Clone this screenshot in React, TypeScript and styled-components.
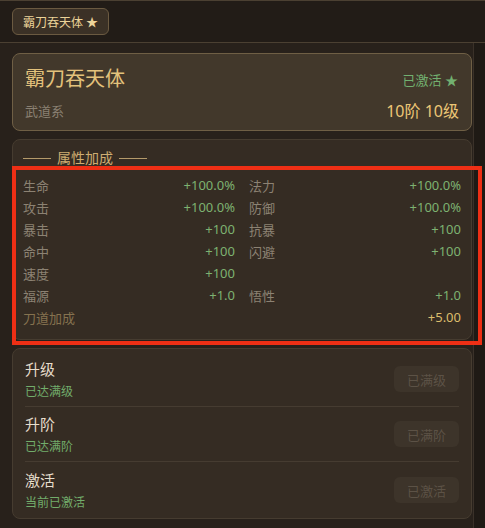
import styled, { createGlobalStyle } from 'styled-components';

const GlobalStyle = createGlobalStyle`
  html, body {
    margin: 0;
    padding: 0;
    background: #201a15;
    font-family: "Noto Sans", "Noto Sans CJK SC", sans-serif;
  }
`;

type Stat = { label: string; value: string };

const statRows: [Stat, Stat | null][] = [
  [{ label: '生命', value: '+100.0%' }, { label: '法力', value: '+100.0%' }],
  [{ label: '攻击', value: '+100.0%' }, { label: '防御', value: '+100.0%' }],
  [{ label: '暴击', value: '+100' }, { label: '抗暴', value: '+100' }],
  [{ label: '命中', value: '+100' }, { label: '闪避', value: '+100' }],
  [{ label: '速度', value: '+100' }, null],
  [{ label: '福源', value: '+1.0' }, { label: '悟性', value: '+1.0' }],
];

const actions = [
  { title: '升级', status: '已达满级', button: '已满级' },
  { title: '升阶', status: '已达满阶', button: '已满阶' },
  { title: '激活', status: '当前已激活', button: '已激活' },
];

export default function App() {
  return (
    <Page>
      <GlobalStyle />
      <TabBar>
        <Tab>霸刀吞天体 ★</Tab>
      </TabBar>
      <Body>
        <Content>
          <HeaderCard>
            <HeaderRow>
              <Title>霸刀吞天体</Title>
              <Active>已激活 ★</Active>
            </HeaderRow>
            <HeaderRow>
              <School>武道系</School>
              <Level>10阶 10级</Level>
            </HeaderRow>
          </HeaderCard>

          <StatsCard>
            <SectionTitle>
              <Dash />
              属性加成
              <Dash />
            </SectionTitle>
            <StatGrid>
              {statRows.map(([a, b], i) => (
                <StatRow key={i}>
                  <StatLabel>{a.label}</StatLabel>
                  <StatValue>{a.value}</StatValue>
                  <StatLabel>{b ? b.label : ''}</StatLabel>
                  <StatValue>{b ? b.value : ''}</StatValue>
                </StatRow>
              ))}
              <BonusRow>
                <StatLabel $bonus>刀道加成</StatLabel>
                <StatValue $bonus>+5.00</StatValue>
              </BonusRow>
            </StatGrid>
            <Highlight />
          </StatsCard>

          <ActionCard>
            {actions.map((a) => (
              <ActionRow key={a.title}>
                <ActionText>
                  <ActionTitle>{a.title}</ActionTitle>
                  <ActionStatus>{a.status}</ActionStatus>
                </ActionText>
                <DisabledButton disabled>{a.button}</DisabledButton>
              </ActionRow>
            ))}
          </ActionCard>
        </Content>
        <Gutter />
      </Body>
    </Page>
  );
}

const Page = styled.div`
  width: 485px;
  height: 528px;
  display: flex;
  flex-direction: column;
  background: #201a15;
`;

const TabBar = styled.div`
  height: 41px;
  display: flex;
  align-items: center;
  padding: 0 12px;
  border-top: 1px solid #4b4032;
  border-bottom: 1px solid #4b4032;
  background: #221c17;
  box-sizing: content-box;
`;

const Tab = styled.div`
  height: 25px;
  padding: 0 10px;
  display: flex;
  align-items: center;
  border-radius: 6px;
  border: 1px solid #6b5a41;
  background: #3b3126;
  color: #ecd49a;
  font-size: 12px;
`;

const Body = styled.div`
  flex: 1;
  display: flex;
`;

const Content = styled.div`
  width: 473px;
  padding: 10px 1px 0 12px;
  box-sizing: border-box;
  background: #28211b;
  display: flex;
  flex-direction: column;
  gap: 8px;
`;

const Gutter = styled.div`
  flex: 1;
  background: #1f1a15;
  border-left: 1px solid #3a3129;
`;

const HeaderCard = styled.div`
  height: 78px;
  box-sizing: border-box;
  padding: 10px 12px 0 12px;
  border-radius: 8px;
  border: 1px solid #6f5f45;
  background: #42382b;
  display: flex;
  flex-direction: column;
  gap: 4px;
`;

const HeaderRow = styled.div`
  display: flex;
  justify-content: space-between;
  align-items: center;
`;

const Title = styled.div`
  font-size: 20px;
  color: #e3c27c;
  line-height: 30px;
`;

const Active = styled.div`
  font-size: 13px;
  color: #72b070;
  padding-right: 1px;
`;

const School = styled.div`
  font-size: 13px;
  color: #8a8072;
`;

const Level = styled.div`
  font-size: 16px;
  color: #ecc676;
`;

const StatsCard = styled.div`
  position: relative;
  height: 201px;
  box-sizing: border-box;
  padding: 8px 10px 0 10px;
  border-radius: 8px;
  border: 1px solid #463c30;
  background: #352c23;
`;

const SectionTitle = styled.div`
  display: flex;
  align-items: center;
  gap: 6px;
  font-size: 14px;
  color: #cfae72;
  line-height: 20px;
`;

const Dash = styled.span`
  width: 28px;
  height: 1px;
  background: #b49a6a;
`;

const StatGrid = styled.div`
  margin-top: 6px;
  display: flex;
  flex-direction: column;
`;

const StatRow = styled.div`
  display: grid;
  grid-template-columns: 1fr 1fr 1fr 1fr;
  height: 22px;
  align-items: center;
  column-gap: 14px;
  font-size: 13px;
`;

const BonusRow = styled.div`
  display: flex;
  justify-content: space-between;
  height: 22px;
  align-items: center;
  font-size: 13px;
`;

const StatLabel = styled.span<{ $bonus?: boolean }>`
  color: ${(p) => (p.$bonus ? '#85724f' : '#8c8273')};
`;

const StatValue = styled.span<{ $bonus?: boolean }>`
  text-align: right;
  color: ${(p) => (p.$bonus ? '#dcbd6c' : '#7db271')};
`;

const Highlight = styled.div`
  position: absolute;
  left: -1px;
  top: 26px;
  width: 470px;
  height: 179px;
  box-sizing: border-box;
  border: 4px solid #ee2f15;
  pointer-events: none;
`;

const ActionCard = styled.div`
  padding: 3px 12px 0 12px;
  border-radius: 8px;
  border: 1px solid #463c30;
  background: #352c23;
  display: flex;
  flex-direction: column;
`;

const ActionRow = styled.div`
  height: 55px;
  box-sizing: border-box;
  display: flex;
  justify-content: space-between;
  align-items: center;
  border-bottom: 1px solid #463c31;

  &:first-child {
    height: 55px;
  }

  &:last-child {
    border-bottom: none;
    height: 56px;
  }
`;

const ActionText = styled.div`
  display: flex;
  flex-direction: column;
  gap: 3px;
`;

const ActionTitle = styled.div`
  font-size: 15px;
  color: #e6ddcc;
`;

const ActionStatus = styled.div`
  font-size: 12px;
  color: #72ad6b;
`;

const DisabledButton = styled.button`
  width: 65px;
  height: 26px;
  border: none;
  border-radius: 6px;
  background: #3d342a;
  color: #5c5246;
  font-family: inherit;
  font-size: 13px;
  padding: 0;
`;
